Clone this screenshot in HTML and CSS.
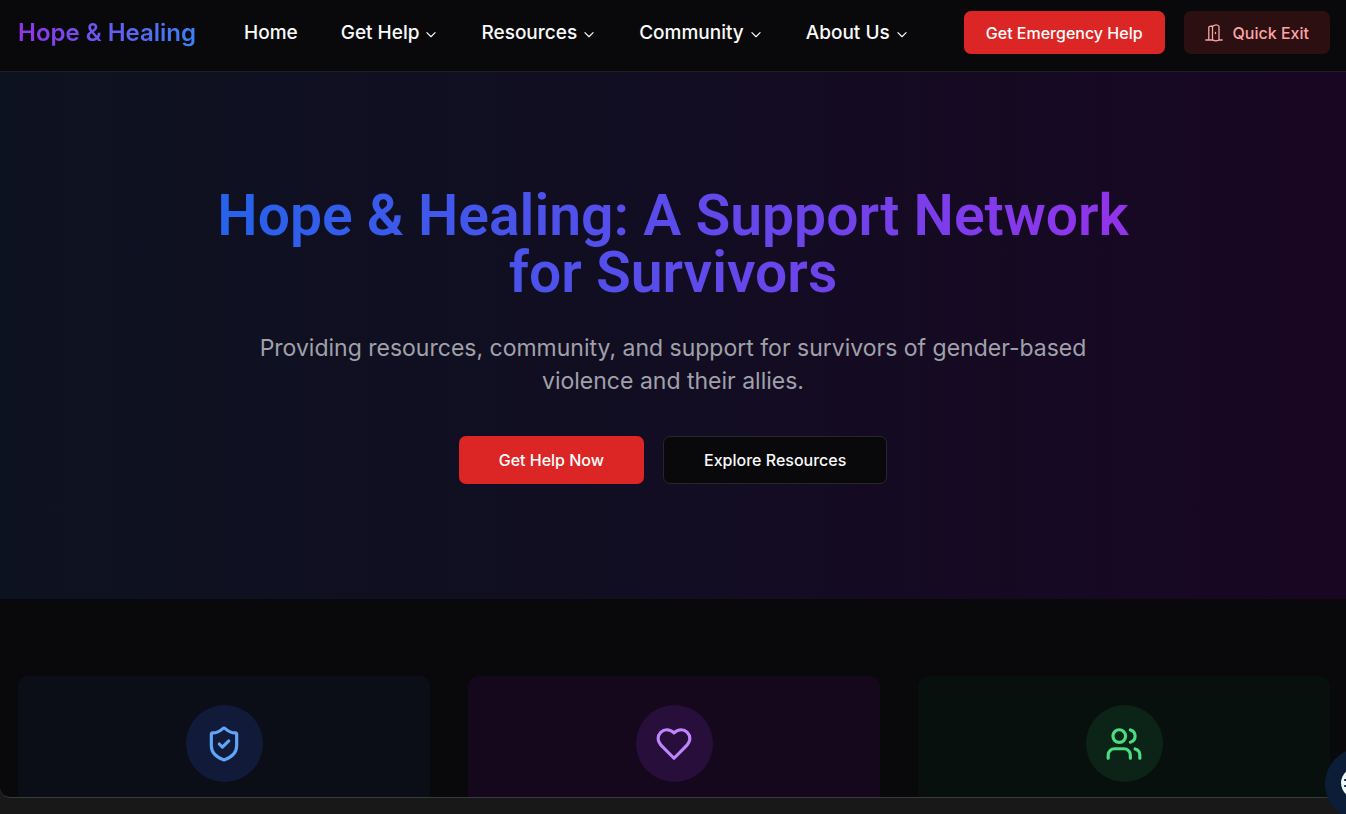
FILE: index.html
```html
<!DOCTYPE html>
<html lang="en">
<head>
<meta charset="utf-8">
<meta name="viewport" content="width=device-width, initial-scale=1">
<title>Hope &amp; Healing</title>
<link rel="stylesheet" href="styles.css">
</head>
<body>
<div class="viewport">
  <header class="site-header">
    <a class="logo" href="#">Hope &amp; Healing</a>
    <nav class="main-nav" aria-label="Main">
      <a class="nav-item" href="#">Home</a>
      <button class="nav-item" type="button">Get Help<svg class="chevron" viewBox="0 0 24 24" aria-hidden="true"><path d="m5 8 7 7 7-7"/></svg></button>
      <button class="nav-item" type="button">Resources<svg class="chevron" viewBox="0 0 24 24" aria-hidden="true"><path d="m5 8 7 7 7-7"/></svg></button>
      <button class="nav-item" type="button">Community<svg class="chevron" viewBox="0 0 24 24" aria-hidden="true"><path d="m5 8 7 7 7-7"/></svg></button>
      <button class="nav-item" type="button">About Us<svg class="chevron" viewBox="0 0 24 24" aria-hidden="true"><path d="m5 8 7 7 7-7"/></svg></button>
    </nav>
    <div class="header-actions">
      <button class="btn btn-danger" type="button">Get Emergency Help</button>
      <button class="btn btn-exit" type="button">
        <svg class="exit-icon" viewBox="0 0 18 18" aria-hidden="true">
          <path d="M.8 16H7.500M14 16h3.200M3.800 16V3.400q0-1 1-1.100L7.500 2M7.500 16V3q0-.8.8-1.100l2-.9q.7-.3 1.500 0l1.400.5q.8.3.8 1.200v12.900q0 .6-.7.7l-2.300.5q-.7.1-1.300-.2zM10.500 8.500v1"/>
        </svg>
        Quick Exit
      </button>
    </div>
  </header>

  <main>
    <section class="hero">
      <div class="hero-inner">
        <h1 class="hero-title">Hope &amp; Healing: A Support Network for Survivors</h1>
        <p class="hero-text">Providing resources, community, and support for survivors of gender-based violence and their allies.</p>
        <div class="hero-actions">
          <button class="btn btn-large btn-danger" type="button">Get Help Now</button>
          <button class="btn btn-large btn-outline" type="button">Explore Resources</button>
        </div>
      </div>
    </section>

    <section class="features">
      <article class="card card-blue">
        <div class="card-icon">
          <svg viewBox="0 0 24 24" aria-hidden="true"><path d="M20 13c0 5-3.500 7.500-7.660 8.950a1 1 0 0 1-.67-.01C7.500 20.500 4 18 4 13V6a1 1 0 0 1 1-1c2 0 4.500-1.200 6.240-2.720a1.170 1.170 0 0 1 1.520 0C14.510 3.810 17 5 19 5a1 1 0 0 1 1 1z"/><path d="m9 12 2 2 4-4"/></svg>
        </div>
      </article>
      <article class="card card-purple">
        <div class="card-icon">
          <svg viewBox="0 0 24 24" aria-hidden="true"><path d="M19 14c1.490-1.460 3-3.210 3-5.500A5.500 5.500 0 0 0 16.500 3c-1.760 0-3 .5-4.500 2-1.500-1.500-2.740-2-4.500-2A5.500 5.500 0 0 0 2 8.500c0 2.300 1.500 4.050 3 5.500l7 7Z"/></svg>
        </div>
      </article>
      <article class="card card-green">
        <div class="card-icon">
          <svg viewBox="0 0 24 24" aria-hidden="true"><path d="M16 21v-2a4 4 0 0 0-4-4H6a4 4 0 0 0-4 4v2"/><circle cx="9" cy="7" r="4"/><path d="M22 21v-2a4 4 0 0 0-3-3.870"/><path d="M16 3.130a4 4 0 0 1 0 7.750"/></svg>
        </div>
      </article>
    </section>
  </main>
</div>
<button class="chat-bubble" type="button" aria-label="Open chat">
  <svg viewBox="0 0 72 72" aria-hidden="true"><ellipse class="face" cx="36" cy="35" rx="20" ry="17"/><path class="marks" d="M20 32h1M20 38h1"/></svg>
</button>
</body>
</html>
```
FILE: styles.css
```css
:root {
  --bg: #09090b;
  --line: #27272a;
  --red: #dc2626;
  --body-font: Inter, "Liberation Sans", sans-serif;
  --title-font: Roboto, "Liberation Sans", sans-serif;
}

* {
  box-sizing: border-box;
}

body {
  margin: 0;
  height: 100vh;
  padding-bottom: 16px;
  position: relative;
  overflow: hidden;
  background: #181818;
  color: #fafafa;
  font-family: var(--body-font);
}

button {
  font: inherit;
  color: inherit;
  border: 0;
  background: none;
  padding: 0;
  cursor: pointer;
}

a {
  color: inherit;
  text-decoration: none;
}

svg {
  fill: none;
  stroke: currentColor;
  stroke-linecap: round;
  stroke-linejoin: round;
}

.viewport {
  height: 100%;
  overflow: hidden;
  background: var(--bg);
  border-bottom: 1px solid #3a3a3c;
  border-radius: 0 0 0 10px;
}

/* Header */
.site-header {
  display: flex;
  align-items: center;
  padding: 11px 16px 17px 18px;
  border-bottom: 1px solid #1f1f23;
}

.logo {
  margin-right: 48px;
  font-size: 24px;
  font-weight: 600;
  line-height: 32px;
  white-space: nowrap;
  color: transparent;
  background: linear-gradient(to right, #9333ea, #3b82f6);
  background-clip: text;
  -webkit-background-clip: text;
}

.main-nav {
  display: flex;
  align-items: center;
  gap: 43px;
}

.nav-item {
  display: flex;
  align-items: center;
  font-size: 19px;
  font-weight: 500;
  line-height: 28px;
  white-space: nowrap;
}

.chevron {
  width: 14px;
  height: 14px;
  margin: 4px 0 0 5px;
  stroke-width: 2;
}

.header-actions {
  display: flex;
  gap: 19px;
  margin-left: auto;
}

.btn {
  display: flex;
  align-items: center;
  justify-content: center;
  height: 43px;
  padding: 0 22px;
  border-radius: 7px;
  font-size: 16px;
  font-weight: 500;
  white-space: nowrap;
}

.btn-danger {
  background: var(--red);
  color: #fff;
}

.btn-exit {
  gap: 10px;
  padding: 0 21px;
  background: #2b0f11;
  color: #fca5a5;
}

.exit-icon {
  width: 18px;
  height: 18px;
  stroke-width: 1.3;
}

/* Hero */
.hero {
  padding: 115px 38px;
  background: linear-gradient(to right, #0d1220, #120d22 50%, #190623);
}

.hero-inner {
  max-width: 922px;
  margin: 0 auto;
  text-align: center;
}

.hero-title {
  margin: 0 0 31px;
  font: 600 57px/57px var(--title-font);
  color: transparent;
  background: linear-gradient(to right, #2563eb, #9333ea);
  background-clip: text;
  -webkit-background-clip: text;
}

.hero-text {
  margin: 0 0 38px;
  font-size: 23px;
  line-height: 33px;
  color: #a1a1aa;
}

.hero-actions {
  display: flex;
  justify-content: center;
  gap: 19px;
}

.btn-large {
  height: 48px;
  padding: 0 40px;
}

.btn-outline {
  background: var(--bg);
  border: 1px solid var(--line);
}

/* Feature cards */
.features {
  display: grid;
  grid-template-columns: repeat(3, 1fr);
  gap: 38px;
  padding: 77px 16px 77px 18px;
}

.card {
  display: flex;
  justify-content: center;
  min-height: 300px;
  padding: 29px;
  border-radius: 10px;
}

.card-icon {
  display: grid;
  place-items: center;
  width: 77px;
  height: 77px;
  border-radius: 50%;
}

.card-icon svg {
  width: 38px;
  height: 38px;
  stroke-width: 2;
}

.card-blue {
  background: #0b0d17;
}

.card-blue .card-icon {
  background: #111b39;
  color: #60a5fa;
}

.card-purple {
  background: #15071c;
}

.card-purple .card-icon {
  background: #280e3b;
  color: #c084fc;
}

.card-green {
  background: #07100d;
}

.card-green .card-icon {
  background: #0c2318;
  color: #4ade80;
}

/* Chat launcher, partly past the window edge */
.chat-bubble {
  position: absolute;
  right: -51px;
  bottom: -6px;
  width: 72px;
  height: 72px;
  border-radius: 50%;
  background: #0c1d38;
}

.chat-bubble svg {
  display: block;
  width: 72px;
  height: 72px;
}

.face {
  fill: #f0fbff;
  stroke: none;
}

.marks {
  stroke: #0c1d38;
  stroke-width: 2;
}
```
